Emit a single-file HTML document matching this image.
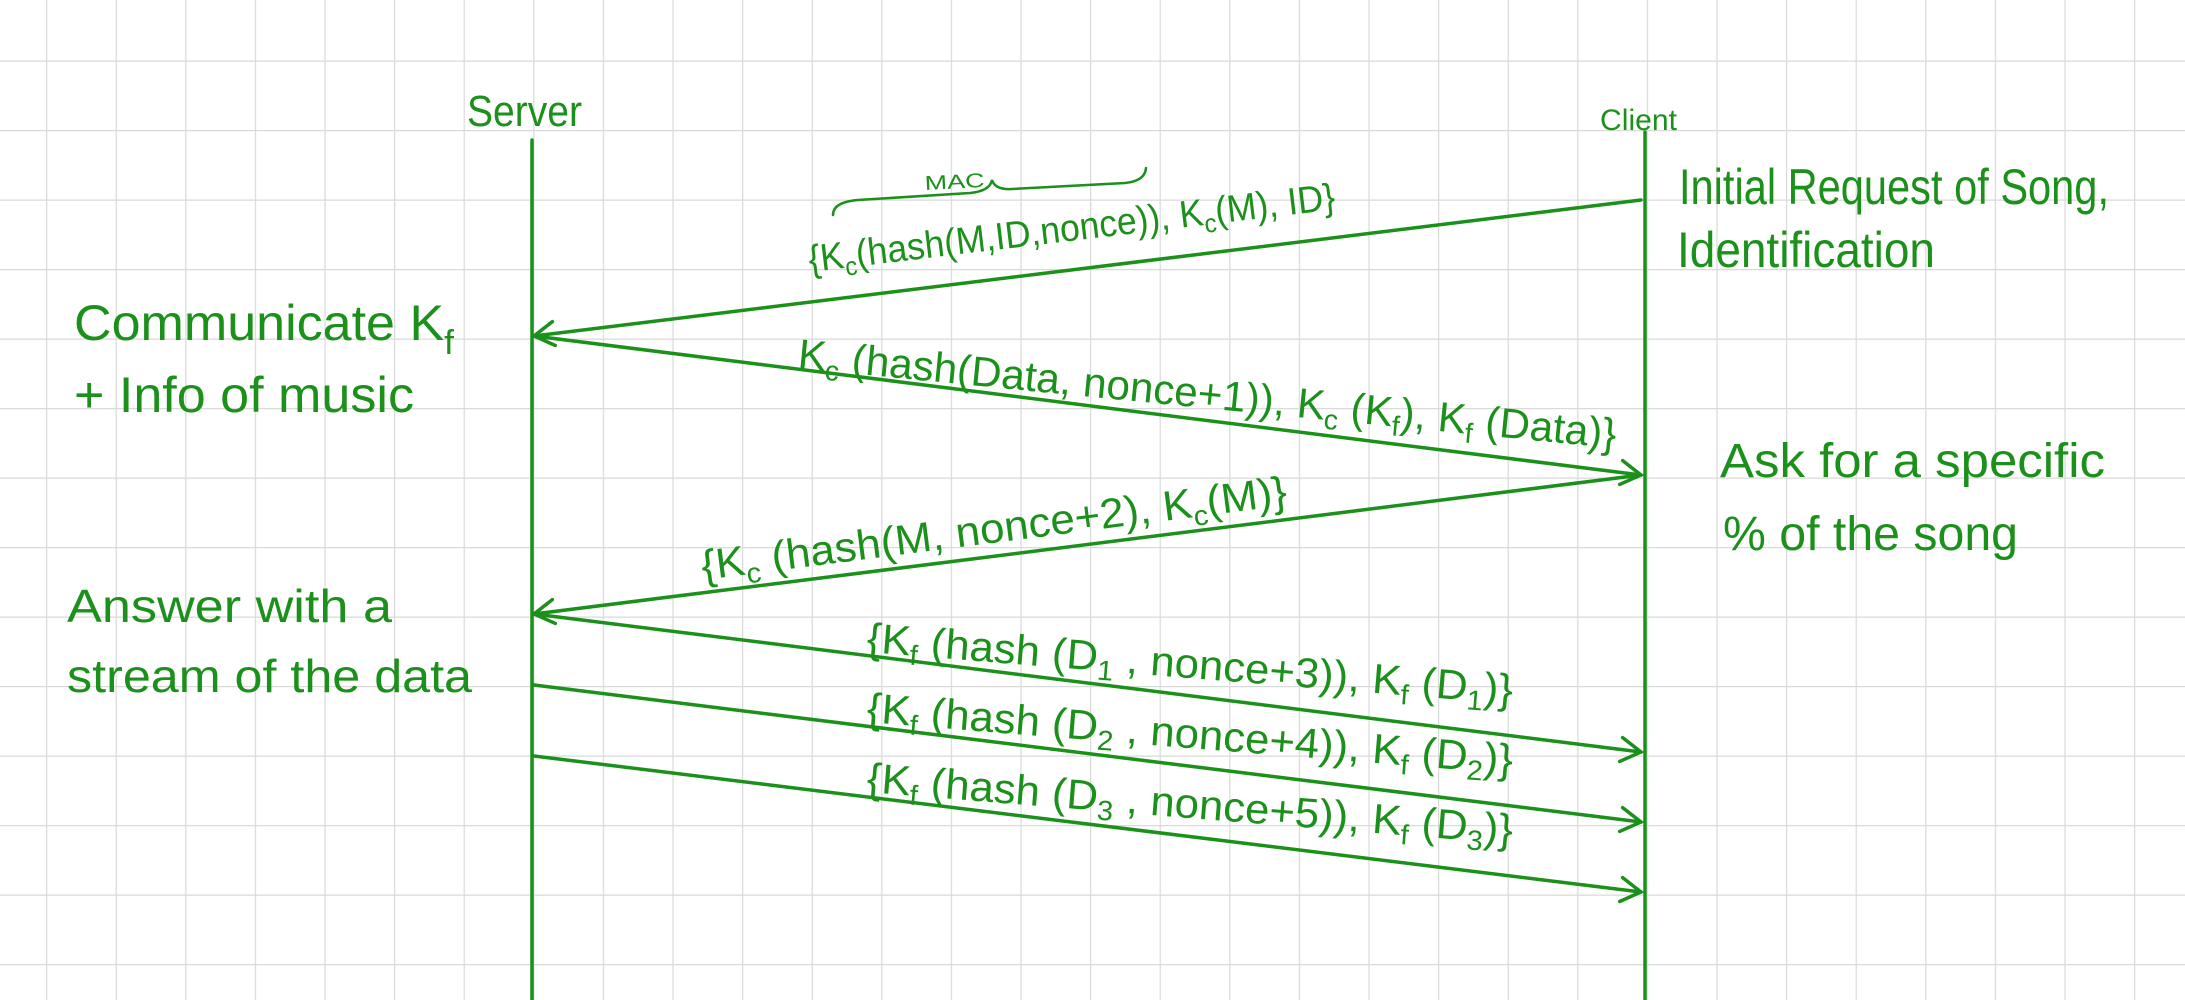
<!DOCTYPE html>
<html><head><meta charset="utf-8"><style>
html,body{margin:0;padding:0;background:#fff;}
svg{display:block;}
text{font-family:"Liberation Sans Narrow","Liberation Sans",sans-serif;fill:#1b901b;}
</style></head><body>
<svg width="2185" height="1000" viewBox="0 0 2185 1000" xmlns="http://www.w3.org/2000/svg">
<defs>
<pattern id="g" x="46" y="60.5" width="69.6" height="69.5" patternUnits="userSpaceOnUse">
<path d="M0,0 V69.5 M0,0 H69.6" stroke="#dadada" stroke-width="2.5" fill="none"/>
</pattern>
<marker id="a" markerUnits="userSpaceOnUse" markerWidth="40" markerHeight="40" refX="0" refY="0" viewBox="-30 -20 40 40" orient="auto" overflow="visible">
<path d="M-20,-12 L0,0 L-20,12" stroke="#1b901b" stroke-width="3.5" fill="none" stroke-linecap="round"/>
</marker>
</defs>
<rect width="2185" height="1000" fill="#fff"/>
<rect width="2185" height="1000" fill="url(#g)"/>

<g stroke="#1b901b" stroke-width="3.5" fill="none" stroke-linecap="round">
<line x1="532" y1="140" x2="532" y2="1000"/>
<line x1="1645" y1="132" x2="1645" y2="1000"/>
<line x1="1641" y1="200" x2="534" y2="336" marker-end="url(#a)"/>
<line x1="534" y1="336" x2="1641" y2="475" marker-end="url(#a)"/>
<line x1="1641" y1="475" x2="534" y2="614" marker-end="url(#a)"/>
<line x1="534" y1="614" x2="1641" y2="752" marker-end="url(#a)"/>
<line x1="534" y1="685" x2="1641" y2="822" marker-end="url(#a)"/>
<line x1="534" y1="756" x2="1641" y2="892" marker-end="url(#a)"/>
<path d="M833,215 Q833,202 858,200 L970,193 Q990,191 992,180 Q995,190 1012,189 L1125,183 Q1145,181 1146,168" stroke-width="2.5"/>
</g>

<text x="467" y="126" font-size="44" textLength="115" lengthAdjust="spacingAndGlyphs">Server</text>
<text x="1600" y="130" font-size="30" textLength="77" lengthAdjust="spacingAndGlyphs">Client</text>

<text x="74" y="340" font-size="50" textLength="380" lengthAdjust="spacingAndGlyphs">Communicate K<tspan font-size="34" dy="14">f</tspan></text>
<text x="74" y="412" font-size="50" textLength="340" lengthAdjust="spacingAndGlyphs">+ Info of music</text>
<text x="67" y="622" font-size="46" textLength="325" lengthAdjust="spacingAndGlyphs">Answer with a</text>
<text x="67" y="692" font-size="46" textLength="405" lengthAdjust="spacingAndGlyphs">stream of the data</text>

<text x="1679" y="204" font-size="50" textLength="430" lengthAdjust="spacingAndGlyphs">Initial Request of Song,</text>
<text x="1677" y="267" font-size="50" textLength="258" lengthAdjust="spacingAndGlyphs">Identification</text>
<text x="1720" y="477" font-size="48" textLength="385" lengthAdjust="spacingAndGlyphs">Ask for a specific</text>
<text x="1723" y="550" font-size="48" textLength="295" lengthAdjust="spacingAndGlyphs">% of the song</text>

<text x="925" y="190" font-size="20" textLength="60" lengthAdjust="spacingAndGlyphs" transform="rotate(-3 925 190)">MAC</text>

<text x="810" y="272" font-size="38" textLength="530" lengthAdjust="spacingAndGlyphs" transform="rotate(-6.8 810 272)">{K<tspan font-size="26" dy="8">c</tspan><tspan dy="-8">(hash(M,ID,nonce)), K</tspan><tspan font-size="26" dy="8">c</tspan><tspan dy="-8">(M), ID}</tspan></text>

<text x="797" y="368" font-size="42" textLength="822" lengthAdjust="spacingAndGlyphs" transform="rotate(5.6 797 368)">K<tspan font-size="28" dy="9">c</tspan><tspan dy="-9"> (hash(Data, nonce+1)), K</tspan><tspan font-size="28" dy="9">c</tspan><tspan dy="-9"> (K</tspan><tspan font-size="28" dy="9">f</tspan><tspan dy="-9">), K</tspan><tspan font-size="28" dy="9">f</tspan><tspan dy="-9"> (Data)}</tspan></text>

<text x="703" y="580" font-size="42" textLength="590" lengthAdjust="spacingAndGlyphs" transform="rotate(-7.3 703 580)">{K<tspan font-size="28" dy="9">c</tspan><tspan dy="-9"> (hash(M, nonce+2), K</tspan><tspan font-size="28" dy="9">c</tspan><tspan dy="-9">(M)}</tspan></text>

<text x="866" y="652" font-size="42" textLength="648" lengthAdjust="spacingAndGlyphs" transform="rotate(4.6 866 652)">{K<tspan font-size="28" dy="9">f</tspan><tspan dy="-9"> (hash (D</tspan><tspan font-size="28" dy="9">1</tspan><tspan dy="-9"> , nonce+3)), K</tspan><tspan font-size="28" dy="9">f</tspan><tspan dy="-9"> (D</tspan><tspan font-size="28" dy="9">1</tspan><tspan dy="-9">)}</tspan></text>

<text x="866" y="722" font-size="42" textLength="648" lengthAdjust="spacingAndGlyphs" transform="rotate(4.6 866 722)">{K<tspan font-size="28" dy="9">f</tspan><tspan dy="-9"> (hash (D</tspan><tspan font-size="28" dy="9">2</tspan><tspan dy="-9"> , nonce+4)), K</tspan><tspan font-size="28" dy="9">f</tspan><tspan dy="-9"> (D</tspan><tspan font-size="28" dy="9">2</tspan><tspan dy="-9">)}</tspan></text>

<text x="866" y="792" font-size="42" textLength="648" lengthAdjust="spacingAndGlyphs" transform="rotate(4.6 866 792)">{K<tspan font-size="28" dy="9">f</tspan><tspan dy="-9"> (hash (D</tspan><tspan font-size="28" dy="9">3</tspan><tspan dy="-9"> , nonce+5)), K</tspan><tspan font-size="28" dy="9">f</tspan><tspan dy="-9"> (D</tspan><tspan font-size="28" dy="9">3</tspan><tspan dy="-9">)}</tspan></text>
</svg>
</body></html>
